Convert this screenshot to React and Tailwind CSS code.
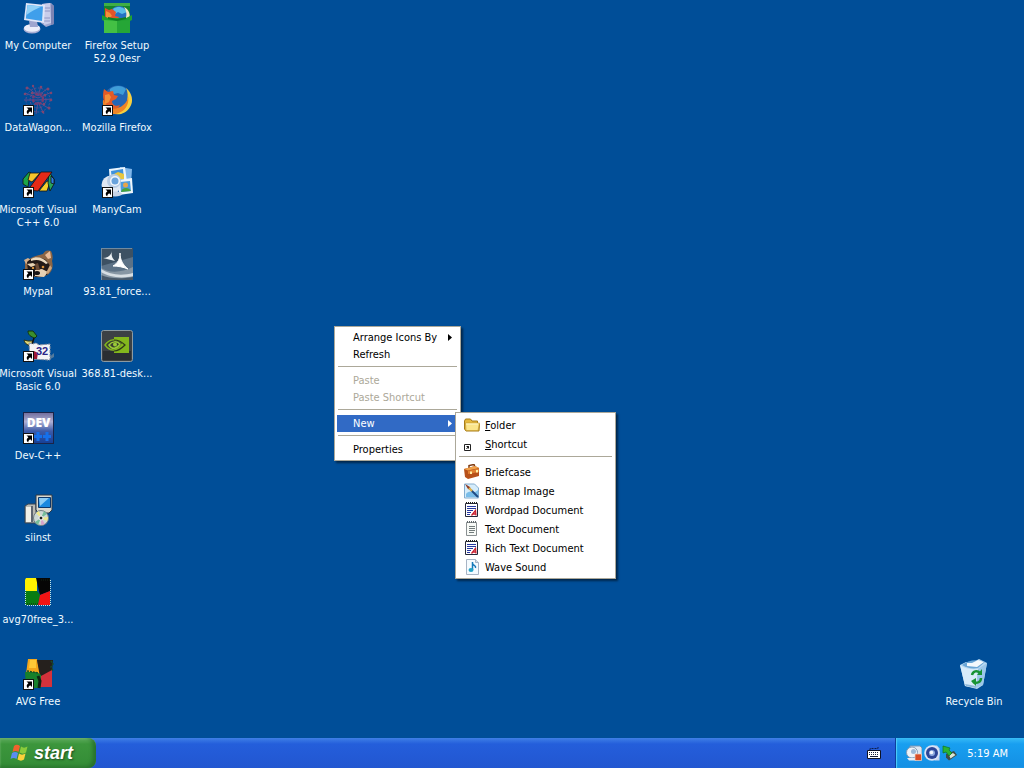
import React, { useState } from 'react';

function ShortcutArrow() {
    return (
        <g>
            <rect x="1.5" y="21.5" width="10" height="10" fill="#fff" stroke="#111" />
            <path d="M4.500 23.500h5.500V29l-1.800-1.800c-1.500 1-2 1.800-1.900 3.300-2.300-1.500-2-3.700.1-5.200z" fill="#000" />
        </g>
    );
}

function DesktopSvg({ shortcut, children }) {
    return (
        <svg viewBox="0 0 32 32" className="size-8 shrink-0 overflow-visible" aria-hidden="true">
            {children}
            {shortcut && <ShortcutArrow />}
        </svg>
    );
}

function ComputerIcon() {
    return (
        <DesktopSvg>
            <path d="M20 2l9-1 3 3v18l-8 3-5-4z" fill="#9fa6cf" />
            <path d="M20 2l8-1 1 20-7 2z" fill="#c9cdea" />
            <path d="M29 2l3 2v18l-3 1z" fill="#7c84b4" />
            <path d="M22 6h6M22 9h6M22 16h6M22 19h6" stroke="#8f96c4" />
            <ellipse cx="10" cy="27" rx="8.500" ry="4.500" fill="#a9aed4" />
            <ellipse cx="10" cy="26" rx="8" ry="3.800" fill="#eceefa" />
            <path d="M7 19h8l1 6H8z" fill="#9fa6cf" />
            <path d="M4 1l19 2-1 18-20-3z" fill="#dfe6f8" />
            <path d="M5.500 3l15.500 1.500-1 14.500L3.800 16.500z" fill="#3f9feb" />
            <path d="M5.500 3l14 1.500C14 7 8 10 4.500 13z" fill="#8ed0f8" />
        </DesktopSvg>
    );
}

function FirefoxSetupIcon() {
    return (
        <DesktopSvg>
            <path d="M3 1h26v14H3z" fill="#14852b" />
            <path d="M3 1h26v3H3z" fill="#3fae46" />
            <circle cx="18" cy="14" r="10" fill="#2572c4" />
            <path d="M12 7c6-4 12-1 14 3l-5 2-4-2-3 2z" fill="#59bce8" />
            <path d="M23 5c5 2 7 8 5 13h-4c2-4 2-8-1-13z" fill="#f3e9c0" />
            <path d="M4 6l4 2 3-1 4 3-1 4 4 1-2 3H4z" fill="#e2542a" />
            <path d="M5 9l4 2 2 3-3 2H5z" fill="#f59138" />
            <path d="M1 13l6 3h18l6-3v5l-2 1v12H3V19l-2-1z" fill="#1fa032" />
            <path d="M3 18l13 1 13-1v13H3z" fill="#25a636" />
            <path d="M3 18l13 1v12H3z" fill="#43c044" />
            <path d="M7 15l9 2 9-2v2l-9 2-9-2z" fill="#107c25" />
        </DesktopSvg>
    );
}

function DataWagonIcon() {
    return (
        <DesktopSvg shortcut>
            <g fill="none" stroke="#5c4d8e">
                <path d="M16 12L5 3M16 12L11 2M16 12l3-10M16 12l10-8M16 14L3 9M16 14l14-6M16 16L2 16M16 16l14-1M16 18L5 26M16 18l-2 12M16 18l6 12M16 18l12 7" />
                <circle cx="16" cy="16" r="8" strokeDasharray="3 1" />
                <circle cx="16" cy="16" r="12" strokeDasharray="2 1.500" />
            </g>
            <circle cx="16" cy="15" r="5" fill="none" stroke="#743c74" strokeWidth="2.500" strokeDasharray="3 1" />
            <g fill="#7f4670">
                <circle cx="5" cy="4" r="1.500" /><circle cx="11" cy="2" r="1.200" /><circle cx="19" cy="3" r="1.300" />
                <circle cx="26" cy="5" r="1.500" /><circle cx="3" cy="10" r="1.300" /><circle cx="29" cy="9" r="1.300" />
                <circle cx="29" cy="16" r="1.300" /><circle cx="27" cy="24" r="1.500" /><circle cx="21" cy="28" r="1.300" />
                <circle cx="10" cy="9" r="1.300" /><circle cx="23" cy="11" r="1.300" /><circle cx="22" cy="20" r="1.300" />
            </g>
        </DesktopSvg>
    );
}

function FirefoxIcon() {
    return (
        <DesktopSvg shortcut>
            <circle cx="17" cy="15.500" r="14" fill="#2467b5" />
            <path d="M9 5c5-4 12-4 16 0l-3 6-5-2-4 1-4-3z" fill="#3f9dd8" />
            <path d="M25 4c6 5 8 13 4 19-4 7-12 9-19 6l4-5c6 1 11-2 12-7s1-9-1-13z" fill="#f7cf3d" />
            <path d="M27 12c2 10-5 18-15 18C5 29 1 23 2 16l6 2c3 6 9 7 13 4s6-6 6-10z" fill="#ee8425" />
            <path d="M3 5l4 3 5-1 1 4 4 1-2 3-4 2c0 4 4 6 8 4-1 4-7 5-11 2-6-4-7-11-5-18z" fill="#e25a26" />
            <path d="M4 11l4-1 2 3-2 5-4 2z" fill="#f28f38" />
        </DesktopSvg>
    );
}

function VisualCppIcon() {
    return (
        <DesktopSvg shortcut>
            <g stroke="#111" strokeWidth=".8" strokeLinejoin="round">
                <path d="M1 13l6-7 2 1-2 7-1 7-5-3z" fill="#1ba548" />
                <path d="M8 7h10l-8 9-4-2z" fill="#f6c52c" />
                <path d="M17 25l8-10 3 1-3 9z" fill="#f6d02c" />
                <path d="M27 6l5 7v5l-4 7-2-8z" fill="#27a45c" />
                <path d="M29 10l3 3v5l-3-1z" fill="#2b7be0" />
                <path d="M6 24L19 6h11L16 25z" fill="#e42a18" />
            </g>
        </DesktopSvg>
    );
}

function ManyCamIcon() {
    return (
        <DesktopSvg shortcut>
            <path d="M19 1l12 2-1 15-12-1z" fill="#7fb6ea" />
            <path d="M8 3L24 1l2 15L9 18z" fill="#e9f4fd" />
            <path d="M10 5l12-2 1 11-12 1z" fill="#3f92dc" />
            <path d="M11 9l6-3 6 2v5l-12 1z" fill="#e7c63f" />
            <path d="M17 14l14-2 1 15-14 2z" fill="#eef6fd" />
            <path d="M19 16l10-1 1 10-10 1z" fill="#4b9be0" />
            <circle cx="24.500" cy="19" r="2.500" fill="#e6a54b" />
            <path d="M20 26c1-5 8-5 10-1z" fill="#46a33b" />
            <circle cx="10" cy="19" r="9.500" fill="#dfe7f2" />
            <circle cx="13" cy="15" r="7" fill="#b6cbe4" />
            <circle cx="14" cy="15" r="5" fill="#f2f7fc" />
            <circle cx="14" cy="15" r="3.500" fill="#6aa3dc" />
            <ellipse cx="14" cy="28" rx="7" ry="2.500" fill="#c7d3e5" />
        </DesktopSvg>
    );
}

function MypalIcon() {
    return (
        <DesktopSvg shortcut>
            <path d="M3 15c2-4 7-6 18-9 2-4 5-4 8-3 2 4 2 7 1 10 2 7-1 13-7 15-8 3-17 0-20-6z" fill="#8c6544" />
            <path d="M23 7l5-4 1 7-3 1z" fill="#e9bd9a" />
            <path d="M2 12l4-2 3 2-5 4z" fill="#d7b08b" />
            <path d="M5 14c5-5 12-6 19-2l5 7-4 8-11 2-8-5z" fill="#231a18" />
            <path d="M9 11c5-3 12-2 17 4l-2 1c-5-4-9-5-15-3z" fill="#ecdabf" />
            <path d="M5 16l6-1 3 2-5 2z" fill="#e8d3b5" />
            <path d="M13 22l7-1 6 3-4 5-9-1z" fill="#e6d0b3" />
            <path d="M13 16l3-1 2 7h-4z" fill="#6b4a35" />
            <circle cx="21" cy="19" r="1.300" fill="#d9903b" />
            <circle cx="11" cy="20" r="1.200" fill="#d9903b" />
            <ellipse cx="15" cy="25" rx="3" ry="2" fill="#171314" />
            <path d="M28 17l2 3-4 6-2-1z" fill="#cda57c" />
        </DesktopSvg>
    );
}

function InstallShieldIcon() {
    return (
        <DesktopSvg>
            <path d="M0 0h32v32H0z" fill="#5d7286" />
            <path d="M0 0h32v9L0 18z" fill="#3d5163" />
            <path d="M0 20c8 5 20 5 32-1v13H0z" fill="#8796a3" />
            <path d="M0 21c9 6 21 7 32 4v3c-12 3-24 1-32-4z" fill="#d7dee3" />
            <path d="M0 27c9 4 20 4 32 2v3H0z" fill="#48596a" />
            <path d="M11 3c-1 4 0 7 3 10L2 10c5 0 8-3 9-7z" fill="#eef3f6" />
            <path d="M19 5c0 7 3 12 8 16-5-2-10-3-15-3 5-3 7-7 7-13z" fill="#fff" stroke="#fff" />
            <path d="M.5 31.500V.5h31" fill="none" stroke="#a7c4dc" strokeDasharray="1 1" />
        </DesktopSvg>
    );
}

function VisualBasicIcon() {
    return (
        <DesktopSvg shortcut>
            <path d="M25 29l7-6v4l-7 4z" fill="#52799c" />
            <path d="M6 1l5 0 4 5-2 2c-4-1-7-3-7-7z" fill="#3b8f2c" stroke="#12350f" />
            <path d="M2 10l4 1h5l-1 4c-4 1-7-1-8-5z" fill="#e0d678" stroke="#31340f" />
            <path d="M12 8l-2 6 2 4" fill="none" stroke="#111" strokeWidth="1.500" />
            <path d="M7 13l4 1 3-1 3 2 11-1v16l-20-1z" fill="#f4f4f6" stroke="#8a93a5" strokeDasharray="3 1" />
            <path d="M12 21l4 2-1 6h-4z" fill="#a01833" />
            <text x="14" y="25" fontFamily="Liberation Sans, sans-serif" fontSize="11" fontWeight="bold" fill="#2b2587">32</text>
        </DesktopSvg>
    );
}

function NvidiaIcon() {
    return (
        <DesktopSvg>
            <rect x=".5" y=".5" width="31" height="31" rx="2" fill="#3c4145" stroke="#8c9aa2" />
            <path d="M2 21h28v9H2z" fill="#2a2e32" />
            <path d="M13 7h15v16H13z" fill="#83b71d" />
            <path d="M4 15C8 9 15 8 22 13c-5 8-12 10-18 2z" fill="#3a4030" stroke="#83b71d" strokeWidth="1.500" />
            <path d="M8 15c3-4 8-4 11-1-3 5-8 6-11 1z" fill="none" stroke="#9acb37" strokeWidth="1.500" />
            <circle cx="14" cy="14.500" r="2" fill="#9acb37" />
            <path d="M13 10c5 0 9 3 11 5-3 3-7 6-11 6" fill="none" stroke="#2e3a18" strokeWidth="1.200" />
        </DesktopSvg>
    );
}

function DevCppIcon() {
    return (
        <DesktopSvg shortcut>
            <defs>
                <linearGradient id="devFace" x1="0" y1="0" x2="0" y2="1">
                    <stop offset="0" stopColor="#6f6c9c" />
                    <stop offset=".3" stopColor="#aeb0d4" />
                    <stop offset=".6" stopColor="#3d5ba8" />
                    <stop offset="1" stopColor="#143f96" />
                </linearGradient>
            </defs>
            <rect x="1.500" y=".5" width="30" height="31" fill="url(#devFace)" stroke="#1a2448" />
            <text x="16.500" y="15" textAnchor="middle" fontFamily="Open Sans, sans-serif" fontSize="12" fontWeight="800" fill="#fff">DEV</text>
            <path d="M16 20v9M12 24.500h8M25 20v9M21 24.500h8" stroke="#1670ea" strokeWidth="3" />
        </DesktopSvg>
    );
}

function SetupIcon() {
    return (
        <DesktopSvg>
            <path d="M3 12l3-2h8v19H3z" fill="#b9bab4" stroke="#39424f" />
            <path d="M4 13h5v15H4z" fill="#f1f0e8" />
            <path d="M10 12v16" stroke="#5d6671" strokeWidth="2" />
            <path d="M14 1h16v15l-3 3H17l-3-3z" fill="#d9d8ce" stroke="#2f3945" />
            <path d="M16.500 3.500h12v10h-12z" fill="#1988df" stroke="#0c376b" />
            <path d="M17 4h10l-9 8z" fill="#8acbf4" />
            <circle cx="19" cy="24" r="7.500" fill="#cdd9d6" stroke="#707d83" />
            <path d="M19 24l-5-5 3-2zM19 24l7-1-1 4z" fill="#f0e989" />
            <path d="M19 24l3-7 3 3zM19 24l-3 7-3-3z" fill="#75bd9a" />
            <path d="M19 24l4 6-4 1z" fill="#d5a3ca" />
            <circle cx="19" cy="24" r="2" fill="#222" stroke="#fff" />
        </DesktopSvg>
    );
}

function AvgIcon() {
    return (
        <DesktopSvg>
            <path d="M4 2h11v14H3V4z" fill="#fff200" />
            <path d="M14 2h14v13l-10 4z" fill="#060606" />
            <path d="M3 15h12l3 4-2 10H3z" fill="#087c12" />
            <path d="M28 15v14H16l2-10z" fill="#f01414" />
            <path d="M28.500 4v25.500H4M3.500 14v15" fill="none" stroke="#c5e6e7" strokeDasharray="1 1" />
            <path d="M19 4h9M5 28h12" stroke="#122314" strokeDasharray="1 1" />
        </DesktopSvg>
    );
}

function AvgFreeIcon() {
    return (
        <DesktopSvg shortcut>
            <path d="M6 1h9l3 15H4z" fill="#f4a61b" />
            <path d="M8 2h6v8H7z" fill="#ffc936" />
            <path d="M15 2h16l-1 12-12 5z" fill="#25201d" />
            <path d="M3 14h12l4 3v13H4z" fill="#17802b" />
            <path d="M30 12v17H18l1-11z" fill="#d4323b" />
            <path d="M5 13l11 2M29 3l2 3-2 3 2 4" fill="none" stroke="#174e26" strokeWidth="1.500" strokeDasharray="2 1" />
            <path d="M16 18l2 5-1 7" fill="none" stroke="#102512" strokeWidth="3" />
        </DesktopSvg>
    );
}

function RecycleBinIcon() {
    return (
        <DesktopSvg>
            <path d="M2 7l6-3 6 1 7-4 8 4-4 22-6 4-12-3z" fill="#b9d9f1" />
            <path d="M2 7c5 4 12 5 18 4l-2 19-11-2z" fill="#d8ecfa" />
            <path d="M20 11l9-6-4 22-7 3z" fill="#9cc7ea" />
            <path d="M4 7c6-5 15-6 23-3l-7 6c-6 1-11 0-16-3z" fill="#6aa6d6" />
            <path d="M9 5l5 0 6-3 6 2-7 5-10-1z" fill="#f3f9fd" />
            <path d="M7 26l11 2v2L8 28z" fill="#8db7d9" />
            <g fill="none" stroke="#189335" strokeWidth="2.500">
                <path d="M14 17c1-4 5-5 8-2M23 20c0 4-4 6-8 4" />
            </g>
            <path d="M19 17h5v-6zM18 20l-5 3 5 5z" fill="#189335" />
        </DesktopSvg>
    );
}

const desktopItems = [
    { icon: ComputerIcon, lines: ['My Computer'] },
    { icon: DataWagonIcon, lines: ['DataWagon...'] },
    { icon: VisualCppIcon, lines: ['Microsoft Visual', 'C++ 6.0'] },
    { icon: MypalIcon, lines: ['Mypal'] },
    { icon: VisualBasicIcon, lines: ['Microsoft Visual', 'Basic 6.0'] },
    { icon: DevCppIcon, lines: ['Dev-C++'] },
    { icon: SetupIcon, lines: ['siinst'] },
    { icon: AvgIcon, lines: ['avg70free_3...'] },
    { icon: AvgFreeIcon, lines: ['AVG Free'] },
    { icon: FirefoxSetupIcon, lines: ['Firefox Setup', '52.9.0esr'] },
    { icon: FirefoxIcon, lines: ['Mozilla Firefox'] },
    { icon: ManyCamIcon, lines: ['ManyCam'] },
    { icon: InstallShieldIcon, lines: ['93.81_force...'] },
    { icon: NvidiaIcon, lines: ['368.81-desk...'] },
];

function DesktopItem({ icon: Icon, lines }) {
    return (
        <button type="button" className="flex h-[82px] w-[76px] flex-col items-center gap-[5px] pt-0.5 text-[#f0faff]">
            <Icon />
            <span className="flex flex-col items-center leading-[13px] whitespace-nowrap">
                {lines.map((line) => (
                    <span key={line}>{line}</span>
                ))}
            </span>
        </button>
    );
}

function SmallSvg({ children }) {
    return (
        <svg viewBox="0 0 16 16" className="size-4 shrink-0" aria-hidden="true">
            {children}
        </svg>
    );
}

function FolderIcon() {
    return (
        <SmallSvg>
            <path d="M.5 4l1-2h5l1.500 2h5.500v3h2l-.5 7H2L.5 12z" fill="#e5b93d" stroke="#a77c17" />
            <path d="M1.500 6h14L14 13.500H2z" fill="#fbe58a" stroke="#c39a31" strokeWidth=".7" />
            <path d="M2 7h12" stroke="#fff6c6" />
        </SmallSvg>
    );
}

function LinkIcon() {
    return (
        <SmallSvg>
            <path d="M.5 8.500h6v6h-6z" fill="#fff" stroke="#222" />
            <path d="M2.500 10.500h2v2M4.500 10.500l-2 2.500" fill="none" stroke="#111" />
        </SmallSvg>
    );
}

function BriefcaseIcon() {
    return (
        <SmallSvg>
            <path d="M5 4V1.500l5-1L11 3" fill="none" stroke="#7d3b13" strokeWidth="1.500" />
            <path d="M0 5l11-3 4 2v8L4 15l-3-2z" fill="#b6501a" />
            <path d="M0 5l11-3 4 2L4 6.500z" fill="#f0a24b" />
            <path d="M4 7l11-2.500V8L4 10z" fill="#e08032" />
            <path d="M6 7.500h2V10H6zM12 6h2v2.500h-2z" fill="#fff0a4" />
        </SmallSvg>
    );
}

function BitmapIcon() {
    return (
        <SmallSvg>
            <path d="M.5 1h10l4 4v10H.5z" fill="#d5ecfa" stroke="#83add0" />
            <path d="M2 11c4-5 7 1 12-4v7H2z" fill="#7abde9" />
            <path d="M7 7l7 7" stroke="#204b83" strokeWidth="2" />
            <path d="M1 1l5 3 1 3-3-1z" fill="#8e3a25" />
            <path d="M5 5l3 3" stroke="#e3b244" strokeWidth="2" />
        </SmallSvg>
    );
}

function WordpadIcon() {
    return (
        <SmallSvg>
            <path d="M1.500 1.500h12v13h-12z" fill="#fff" stroke="#24283b" />
            <path d="M2 1h12" stroke="#222" strokeWidth="2" strokeDasharray="1 1" />
            <path d="M3 4.500h9M3 6.500h9M3 8.500h6M3 10.500h4M3 12.500h3" stroke="#2638a2" />
            <path d="M7.500 13.500l4-5 .5 5M9 12h3" fill="none" stroke="#cb2030" strokeWidth="1.300" />
        </SmallSvg>
    );
}

function TextIcon() {
    return (
        <SmallSvg>
            <path d="M2.500 1.500h10v13h-10z" fill="#f8faf7" stroke="#898f91" />
            <path d="M3 1h10" stroke="#62696d" strokeWidth="2" strokeDasharray="1 1" />
            <path d="M5 5.500h6M5 7.500h6M5 9.500h6M5 11.500h5" stroke="#727b7c" />
        </SmallSvg>
    );
}

function WaveIcon() {
    return (
        <SmallSvg>
            <path d="M2.500.5h9l3 3v12h-12z" fill="#f5fbff" stroke="#a7b4c5" />
            <path d="M11.500.5v3h3" fill="#d0deea" stroke="#a7b4c5" />
            <path d="M8.500 3v8M8.500 4c0 3 4 2 3 5" fill="none" stroke="#1579b9" strokeWidth="1.500" />
            <ellipse cx="7" cy="11" rx="2.500" ry="2" fill="#23a4c8" />
        </SmallSvg>
    );
}

const newItems = [
    { icon: BriefcaseIcon, label: 'Briefcase' },
    { icon: BitmapIcon, label: 'Bitmap Image' },
    { icon: WordpadIcon, label: 'Wordpad Document' },
    { icon: TextIcon, label: 'Text Document' },
    { icon: WordpadIcon, label: 'Rich Text Document' },
    { icon: WaveIcon, label: 'Wave Sound' },
];

function Separator() {
    return <div role="separator" className="mx-px mt-[3px] mb-[5px] h-px bg-[#aca899]" />;
}

function MenuItem({ label, disabled, selected, submenu, onClick }) {
    return (
        <button
            type="button"
            role="menuitem"
            disabled={disabled}
            onClick={onClick}
            className={`flex h-[17px] w-full items-center justify-between pr-1.5 pl-4 ${
                selected ? 'bg-[#316ac5] text-white' : disabled ? 'text-[#aca899]' : 'text-black'
            }`}
        >
            {label}
            {submenu && (
                <svg viewBox="0 0 4 7" className="h-[7px] w-1" aria-hidden="true">
                    <path d="M0 0l4 3.500L0 7z" fill="currentColor" />
                </svg>
            )}
        </button>
    );
}

function NewMenuItem({ icon: Icon, children }) {
    return (
        <button type="button" role="menuitem" className="flex h-[19px] w-full items-center gap-[5px] pl-1.5">
            <Icon />
            <span className="pt-0.5">{children}</span>
        </button>
    );
}

function Taskbar() {
    return (
        <footer className="flex h-[30px] items-stretch bg-linear-to-b from-[#3f7fe6] via-[#245edb] via-20% to-[#2256d0]">
            <button
                type="button"
                className="flex w-24 items-center gap-1 rounded-r-lg bg-linear-to-b from-[#5fae5f] via-[#3c963c] via-20% to-[#338c36] pl-2.5 shadow-[inset_-3px_-1px_4px_#256e2a,inset_0_1px_2px_#8acb86]"
            >
                <svg viewBox="0 0 20 20" className="size-5" aria-hidden="true">
                    <path d="M4 3c2-2 4-1.500 6 0L8.500 9C6.500 7.500 4.500 7.500 2.500 9z" fill="#f0622d" />
                    <path d="M11 3.500c2 1.500 4 1.500 6.500 0L16 9.500c-2 1.500-4 1.500-6.500 0z" fill="#8acb3b" />
                    <path d="M2 10c2-1.500 4-1.500 6 0l-1.500 6c-2-1.500-4-1.500-6 0z" fill="#5b8df0" />
                    <path d="M9 10.500c2 1.500 4 1.500 6.500 0L14 16.500c-2 1.500-4 1.500-6.500 0z" fill="#fbd13b" />
                </svg>
                <span className="font-['Liberation_Sans',sans-serif] text-[18px] leading-5 font-bold text-white italic [text-shadow:1px_1px_2px_#1d4d1f]">
                    start
                </span>
            </button>
            <div className="flex flex-1 items-center justify-end pr-3.5">
                <svg viewBox="0 0 14 14" className="size-3.5" aria-hidden="true">
                    <path d="M3 4V2.500h8V1" fill="none" stroke="#0d1d4a" strokeDasharray="2 1" />
                    <path d="M.5 4.500h13v8H.5z" fill="#fff" stroke="#0d1326" />
                    <path d="M2 6.500h10M2 8.500h10" stroke="#17203c" strokeDasharray="1 1" />
                    <path d="M3 10.500h8" stroke="#17203c" />
                </svg>
            </div>
            <div className="flex items-center gap-0.5 border-l border-[#0d3f9c] bg-linear-to-b from-[#35baf6] via-[#189ff0] via-20% to-[#148fe4] pr-4 pl-2.5 text-white shadow-[inset_1px_0_1px_#4fd0fb]">
                <SmallSvg>
                    <path d="M4 1h10l2 2v8H5z" fill="#dbe6f2" stroke="#7694b4" />
                    <circle cx="6" cy="7.500" r="5.500" fill="#eef3f8" stroke="#839bb5" />
                    <circle cx="7.500" cy="6.500" r="2.500" fill="#9bb8d6" />
                    <path d="M1 13h9v2.500H3z" fill="#e6edf5" />
                    <path d="M9 9h6.500v6.500H9z" fill="#d94c24" stroke="#f0d5c8" strokeWidth=".7" />
                </SmallSvg>
                <SmallSvg>
                    <path d="M8 .5h5l2.500 3v12H11z" fill="#c3d2f0" />
                    <circle cx="8" cy="8" r="7.800" fill="#d8e2f5" />
                    <circle cx="8" cy="8" r="6" fill="#2c4597" />
                    <circle cx="8" cy="8" r="3" fill="#8fabe0" />
                    <circle cx="7.500" cy="7.500" r="1.800" fill="#f3f7ff" />
                </SmallSvg>
                <SmallSvg>
                    <path d="M4 9l8-3 3 4-8 5.500-3-3z" fill="#3f4d48" />
                    <path d="M7 10l4-2 2.500 2-5 3.500z" fill="#dce6d5" />
                    <path d="M1 1l7 2-1 2 3 3-3 3-3-4-3 1z" fill="#29b433" stroke="#107421" strokeWidth=".7" />
                </SmallSvg>
                <time className="ml-[7px]">5:19 AM</time>
            </div>
        </footer>
    );
}

export default function App() {
    const [newOpen, setNewOpen] = useState(true);

    return (
        <div className="flex min-h-screen flex-col bg-[#004e98] font-['DejaVu_Sans_Condensed','Noto_Sans',sans-serif] text-[11px] leading-[13px]">
            <main className="relative flex flex-1 items-end justify-between">
                <div className="grid grid-flow-col grid-rows-[repeat(9,82px)] gap-x-[3px] self-start">
                    {desktopItems.map((item) => (
                        <DesktopItem key={item.lines.join(' ')} {...item} />
                    ))}
                </div>
                <div className="mr-3">
                    <DesktopItem icon={RecycleBinIcon} lines={['Recycle Bin']} />
                </div>

                <div
                    role="menu"
                    aria-label="Desktop"
                    className="absolute top-[326px] left-[334px] w-[127px] border border-[#aca899] bg-white p-0.5 shadow-[2px_2px_2px_#00000080]"
                >
                    <MenuItem label="Arrange Icons By" submenu />
                    <MenuItem label="Refresh" />
                    <Separator />
                    <MenuItem label="Paste" disabled />
                    <MenuItem label="Paste Shortcut" disabled />
                    <Separator />
                    <MenuItem label="New" submenu selected={newOpen} onClick={() => setNewOpen(!newOpen)} />
                    <Separator />
                    <MenuItem label="Properties" />
                </div>

                {newOpen && (
                    <div
                        role="menu"
                        aria-label="New"
                        className="absolute top-[412px] left-[455px] w-[161px] border border-[#aca899] bg-white p-0.5 text-black shadow-[2px_2px_2px_#00000080]"
                    >
                        <NewMenuItem icon={FolderIcon}>
                            <u>F</u>older
                        </NewMenuItem>
                        <NewMenuItem icon={LinkIcon}>
                            <u>S</u>hortcut
                        </NewMenuItem>
                        <Separator />
                        {newItems.map(({ icon, label }) => (
                            <NewMenuItem key={label} icon={icon}>
                                {label}
                            </NewMenuItem>
                        ))}
                    </div>
                )}
            </main>
            <Taskbar />
        </div>
    );
}
